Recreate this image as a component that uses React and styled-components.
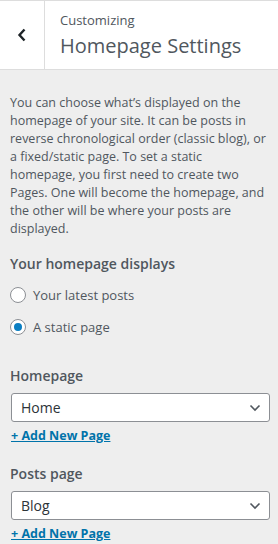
import React from "react";
import styled, { createGlobalStyle } from "styled-components";

const GlobalStyle = createGlobalStyle`
  body {
    margin: 0;
    background: #eeeeee;
    font-family: "Open Sans", "Noto Sans", sans-serif;
    color: #50575e;
  }
`;

const Panel = styled.div`
  width: 278px;
  min-height: 544px;
  background: #eeeeee;
`;

const Header = styled.div`
  display: flex;
  height: 68px;
  background: #fff;
  border-top: 1px solid #dddddd;
  border-bottom: 1px solid #dddddd;
`;

const BackButton = styled.button`
  width: 45px;
  flex: none;
  display: flex;
  align-items: center;
  justify-content: center;
  background: #fff;
  border: 0;
  border-right: 1px solid #dddddd;
  padding: 0;
  color: #1d2327;
`;

const Titles = styled.div`
  padding: 9px 14px 10px 15px;
  display: flex;
  flex-direction: column;
`;

const Small = styled.span`
  font-size: 13px;
  line-height: 20px;
  color: #50575e;
`;

const Big = styled.h1`
  margin: 2px 0 0;
  font-size: 20px;
  font-weight: 400;
  line-height: 28px;
  color: #50575e;
`;

const Body = styled.div`
  padding: 24px 10px 0;
`;

const Description = styled.p`
  margin: 0;
  font-size: 12.5px;
  line-height: 18px;
  color: #50575e;
`;

const Section = styled.div`
  margin-top: ${(p) => p.gap}px;
`;

const Label = styled.div`
  font-size: 14px;
  font-weight: 600;
  line-height: 20px;
  color: #50575e;
`;

const RadioRow = styled.label`
  display: flex;
  align-items: center;
  gap: 7px;
  height: 20px;
  margin-top: ${(p) => p.gap}px;
  font-size: 13px;
  color: #50575e;
`;

const Radio = styled.span`
  width: 16px;
  height: 16px;
  flex: none;
  box-sizing: border-box;
  border-radius: 50%;
  border: 1px solid #8c8f94;
  background: #fff;
  display: flex;
  align-items: center;
  justify-content: center;
  &::after {
    content: "";
    width: 8px;
    height: 8px;
    border-radius: 50%;
    background: ${(p) => (p.checked ? "#0a7ec2" : "transparent")};
  }
`;

const Select = styled.div`
  margin-top: 7px;
  height: 29px;
  box-sizing: border-box;
  margin-left: 1px;
  width: 259px;
  border: 1px solid #8c8f94;
  border-radius: 3px;
  background: #fff;
  display: flex;
  align-items: center;
  justify-content: space-between;
  padding: 0 8px 0 9px;
  font-size: 14px;
  color: #2c3338;
`;

const AddLink = styled.a`
  display: inline-block;
  margin-top: 5px;
  margin-left: 1px;
  font-size: 12.5px;
  font-weight: 700;
  line-height: 18px;
  color: #0073aa;
  text-decoration: underline;
`;

const Chevron = () => (
  <svg width="12" height="8" viewBox="0 0 12 8">
    <path d="M1.5 1.5 L6 6 L10.5 1.5" fill="none" stroke="#50575e" strokeWidth="1.6" />
  </svg>
);

const Back = () => (
  <svg width="10" height="14" viewBox="0 0 10 14">
    <path d="M7.5 1.5 L2.5 7 L7.5 12.5" fill="none" stroke="#1d2327" strokeWidth="2.4" />
  </svg>
);

export default function App() {
  return (
    <Panel>
      <GlobalStyle />
      <Header>
        <BackButton>
          <Back />
        </BackButton>
        <Titles>
          <Small>Customizing</Small>
          <Big>Homepage Settings</Big>
        </Titles>
      </Header>
      <Body>
        <Description>
          You can choose what’s displayed on the homepage of your site. It can be posts in
          reverse chronological order (classic blog), or a fixed/static page. To set a static
          homepage, you first need to create two Pages. One will become the homepage, and the
          other will be where your posts are displayed.
        </Description>
        <Section gap={16}>
          <Label>Your homepage displays</Label>
          <RadioRow gap={11}>
            <Radio />
            Your latest posts
          </RadioRow>
          <RadioRow gap={12}>
            <Radio checked />
            A static page
          </RadioRow>
        </Section>
        <Section gap={29}>
          <Label>Homepage</Label>
          <Select>
            Home
            <Chevron />
          </Select>
          <AddLink href="#">+ Add New Page</AddLink>
        </Section>
        <Section gap={19}>
          <Label>Posts page</Label>
          <Select>
            Blog
            <Chevron />
          </Select>
          <AddLink href="#">+ Add New Page</AddLink>
        </Section>
      </Body>
    </Panel>
  );
}
